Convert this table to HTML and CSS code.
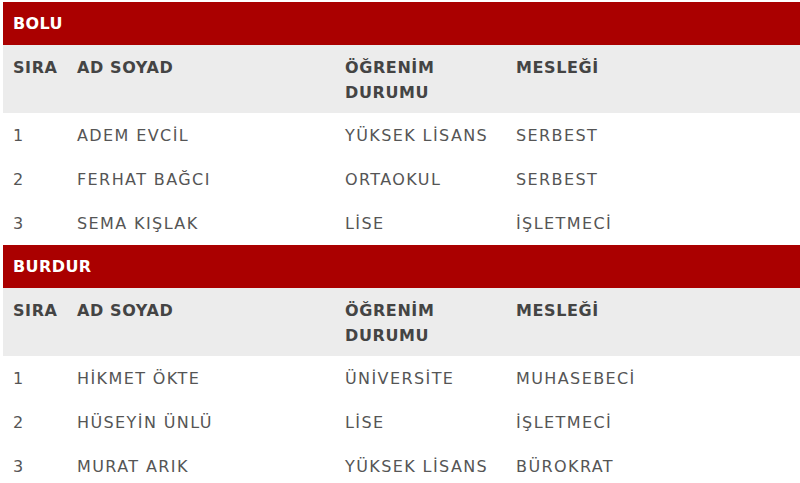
FILE: index.html
```html
<!DOCTYPE html>
<html lang="tr">
<head>
<meta charset="utf-8">
<link rel="stylesheet" href="styles.css">
</head>
<body>
<section class="city">
  <div class="city-title">BOLU</div>
  <div class="grid head">
    <div>SIRA</div><div>AD SOYAD</div><div>ÖĞRENİM DURUMU</div><div>MESLEĞİ</div>
  </div>
  <div class="grid row"><div>1</div><div>ADEM EVCİL</div><div>YÜKSEK LİSANS</div><div>SERBEST</div></div>
  <div class="grid row"><div>2</div><div>FERHAT BAĞCI</div><div>ORTAOKUL</div><div>SERBEST</div></div>
  <div class="grid row"><div>3</div><div>SEMA KIŞLAK</div><div>LİSE</div><div>İŞLETMECİ</div></div>
</section>
<section class="city">
  <div class="city-title">BURDUR</div>
  <div class="grid head">
    <div>SIRA</div><div>AD SOYAD</div><div>ÖĞRENİM DURUMU</div><div>MESLEĞİ</div>
  </div>
  <div class="grid row"><div>1</div><div>HİKMET ÖKTE</div><div>ÜNİVERSİTE</div><div>MUHASEBECİ</div></div>
  <div class="grid row"><div>2</div><div>HÜSEYİN ÜNLÜ</div><div>LİSE</div><div>İŞLETMECİ</div></div>
  <div class="grid row"><div>3</div><div>MURAT ARIK</div><div>YÜKSEK LİSANS</div><div>BÜROKRAT</div></div>
</section>
</body>
</html>
```
FILE: styles.css
```css
html, body {
  margin: 0;
  padding: 0;
  background: #fff;
}
body {
  padding: 2px 0 0 3px;
  font-family: "DejaVu Sans", "Noto Sans", sans-serif;
  color: #555;
}
.city-title {
  background: #aa0000;
  color: #fff;
  font-weight: bold;
  font-size: 16px;
  letter-spacing: 0.4px;
  height: 43px;
  display: flex;
  align-items: center;
  padding-left: 10px;
}
.grid {
  display: grid;
  grid-template-columns: 64px 268px 171px 1fr;
}
.grid > div {
  padding-left: 10px;
}
.head {
  background: #ececec;
  color: #444;
  font-weight: bold;
  font-size: 16px;
  letter-spacing: 0.6px;
  line-height: 25px;
  padding: 10px 0 8px;
  height: 50px;
}
.head > div:nth-child(3) {
  padding-right: 40px;
}
.row {
  height: 44px;
  align-items: center;
  font-size: 16px;
  letter-spacing: 1.4px;
  color: #555;
}
```
